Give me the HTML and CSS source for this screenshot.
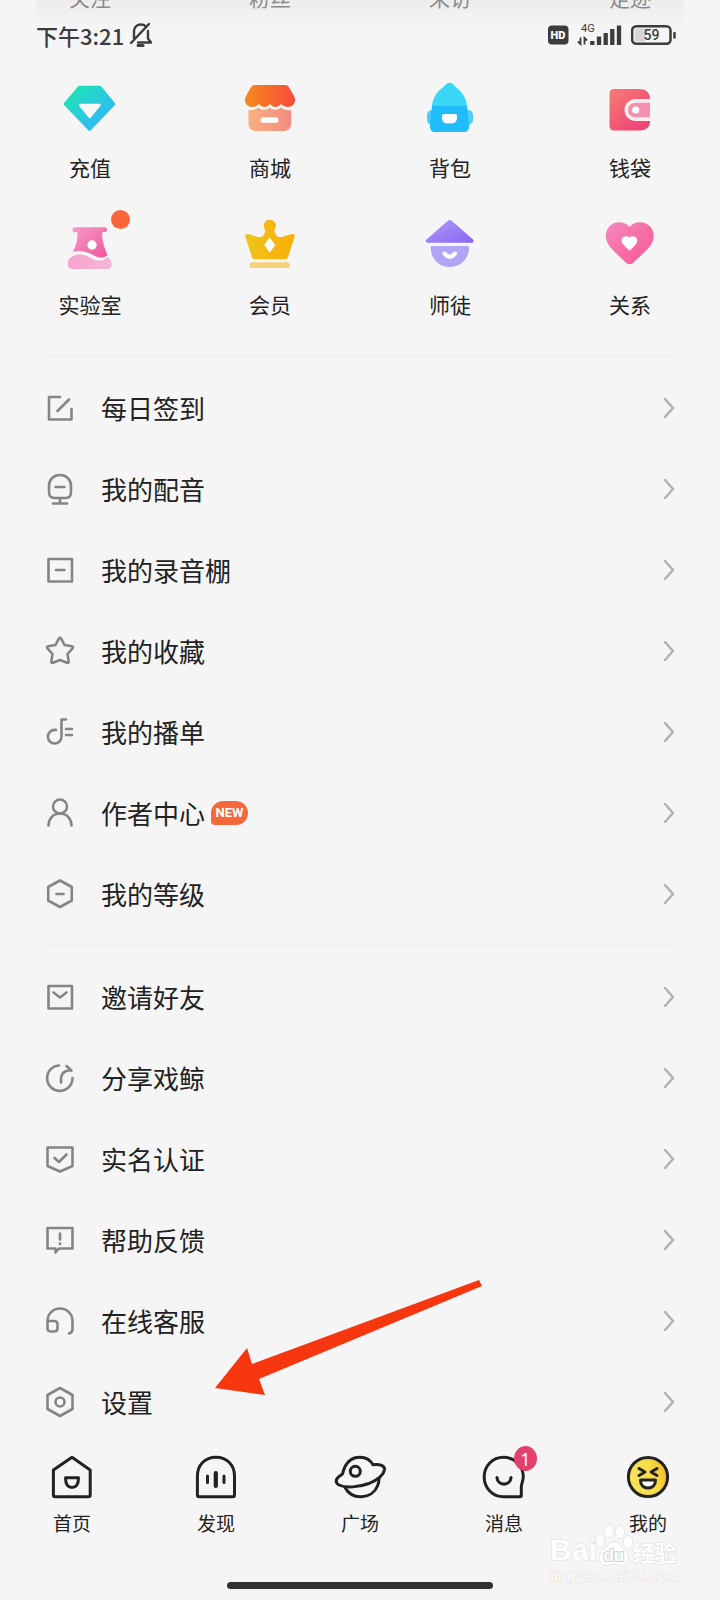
FILE: index.html
```html
<!DOCTYPE html>
<html lang="zh-CN">
<head>
<meta charset="utf-8">
<meta name="viewport" content="width=device-width, initial-scale=1">
<title>我的</title>
<link rel="stylesheet" href="styles.css">
</head>
<body>
<header class="top">
  <div class="stats"><span>关注</span><span>粉丝</span><span>来访</span><span>足迹</span></div>
  <div class="status">
    <span class="time">下午3:21</span>
    <svg class="mute" width="24" height="26" viewBox="0 0 24 26" fill="none" stroke="#3c3c3c" stroke-width="2.4" stroke-linecap="round" stroke-linejoin="round"><path d="M5 16V9.500C5 5 8 2.500 12 2.500c2 0 3.500.6 4.800 1.800M19 9v7.500l3 4H9M2 21 20 2"/><path d="M9 23.500h5" stroke-width="3"/></svg>
    <svg class="signals" width="130" height="26" viewBox="0 0 130 26">
      <rect x="1" y="3.500" width="20.500" height="19" rx="4" fill="#3c3c3c"/>
      <text x="11" y="17" class="hd" text-anchor="middle">HD</text>
      <text x="34" y="9.500" class="net">4G</text>
      <path d="M33.500 15.500v6.500l-2.500-2.500M37.500 22.500v-6.500l2.500 2.500" fill="none" stroke="#3c3c3c" stroke-width="1.800"/>
      <path d="M45.300 19v4M52 14.500V23M58.700 11v12M65.300 7v16M72 3.500V23" fill="none" stroke="#3c3c3c" stroke-width="4.300"/>
      <rect x="85.200" y="4.200" width="38.300" height="17.500" rx="4" fill="none" stroke="#3c3c3c" stroke-width="2.500"/>
      <path d="M88 6.500h10v13H88z" fill="#d5d5d5"/>
      <path d="M127.500 11v4.500" stroke="#3c3c3c" stroke-width="2.500" stroke-linecap="round"/>
      <text x="104.500" y="18" class="charge" text-anchor="middle">59</text>
    </svg>
  </div>
</header>

<main>
<nav class="shortcuts" aria-label="快捷入口">
  <a href="#"><span class="pic"><svg width="56" height="56" viewBox="0 0 56 56"><defs><linearGradient id="g1" x1="0" y1="0" x2="1" y2="1"><stop offset=".1" stop-color="#20e3b6"/><stop offset=".9" stop-color="#33b4ff"/></linearGradient></defs><path d="M17.500 8.500h20.500L51.500 25 27.500 50 3.500 25z" fill="url(#g1)" stroke="url(#g1)" stroke-width="3.500" stroke-linejoin="round"/><path d="M18 26h19.500L27.700 38z" fill="#f8f8f8" stroke="#f8f8f8" stroke-width="2.500" stroke-linejoin="round"/></svg></span>充值</a>
  <a href="#"><span class="pic"><svg width="56" height="56" viewBox="0 0 56 56"><defs><linearGradient id="g2"><stop stop-color="#f58a1f"/><stop offset="1" stop-color="#fb4a3a"/></linearGradient><linearGradient id="g3"><stop stop-color="#f8b080"/><stop offset="1" stop-color="#f58b80"/></linearGradient></defs><path d="M13 6h30c2 0 3 .8 4 2.300l5 8.700c3 6-1 11-6 11-3 0-5-1-7-3-3 4-8 4-11 0-3 4-8 4-11 0-2 2-4 3-7 3-5 0-9-5-6-11l5-8.700C10 6.800 11 6 13 6z" fill="url(#g2)"/><path d="M6.500 31c4 .5 7-.5 10-2.500 3 3 8 3 11.200 0 3.200 3 8 3 11 0 3 2 6 3 10.300 2.500V45c0 4-3 7-7 7H13.500c-4 0-7-3-7-7z" fill="url(#g3)"/><rect x="18.500" y="38.300" width="18" height="5.500" rx="2.500" fill="#fff"/></svg></span>商城</a>
  <a href="#"><span class="pic"><svg width="56" height="56" viewBox="0 0 56 56"><rect x="5" y="31" width="46" height="15" rx="5" fill="#51cdf9"/><path d="M10 29c0-9 4-15 10-20 3-2 4-5.300 7.700-5.300S32 7 35 9c6 5 10 11 10 20z" fill="#3ad6f8"/><path d="M10 27h35c.5 7 2 12 2 20 0 4-2 6-5 6H13c-3 0-5-2-5-6 0-8 1.500-13 2-20z" fill="#22bdf8"/><path d="M22 35h11c1.500 0 2 .7 2 2v2c0 3-2 5.300-5 5.300h-5c-3 0-5-2.300-5-5.300v-2c0-1.300.7-2 2-2z" fill="#fff"/></svg></span>背包</a>
  <a href="#"><span class="pic"><svg width="56" height="56" viewBox="0 0 56 56"><defs><linearGradient id="g4" x1="0" y1="0" x2=".8" y2="1"><stop stop-color="#f67c72"/><stop offset="1" stop-color="#ef4179"/></linearGradient></defs><path d="M12 10h26c6 0 10 4 10 10v22c0 6-4 9.500-10 9.500H12c-3 0-4.500-2-4.500-4.500V14.500C7.500 12 9 10 12 10z" fill="url(#g4)"/><path d="M49 20H34c-7 0-11.500 5-11.500 11S27 42 34 42h15z" fill="#fbeff1"/><path d="M48 23.800H34c-5 0-8 3-8 7.200s3 7.300 8 7.300h14z" fill="#f391ae"/><circle cx="33.700" cy="31" r="3.600" fill="#fff"/></svg></span>钱袋</a>
  <a href="#"><span class="pic"><svg width="56" height="56" viewBox="0 0 56 56"><defs><linearGradient id="g5" x1="0" y1="0" x2="1" y2="1"><stop stop-color="#f79cc9"/><stop offset="1" stop-color="#f0559b"/></linearGradient><linearGradient id="g6"><stop stop-color="#f5a3ce"/><stop offset="1" stop-color="#f6b6d6"/></linearGradient></defs><path d="M13 11.300h29.500c3.500 0 3.500 5 0 5H40c0 8 2 15 5.500 23-4 3-8 3-13 .5-7-4-14-6-22-4 4-6 5-12 5-19.500H13c-3.500 0-3.500-5 0-5z" fill="url(#g5)"/><circle cx="30" cy="29" r="4.700" fill="#fff"/><path d="M8 42c6-5 14-4 20-.5 7 4 12 4.500 18-.5 3 3 4 5.500 3.700 8-.2 2.500-2 4-5 4H11c-3 0-5.300-2-5.300-5 0-2.500.8-4.500 2.300-6z" fill="url(#g6)"/></svg><i class="dot"></i></span>实验室</a>
  <a href="#"><span class="pic"><svg width="56" height="56" viewBox="0 0 56 56"><defs><linearGradient id="g7"><stop stop-color="#eec51d"/><stop offset="1" stop-color="#fcad06"/></linearGradient></defs><path d="M27.700 3.700a6.200 6.200 0 0 1 4.500 10.500c1 4 2.500 7 5.800 7 4 0 8-2.500 12-3.200 2-.3 3 .7 2.600 2.500l-6.500 20c-.5 1.800-1.500 2.700-3.300 2.700H13c-1.800 0-2.800-.9-3.300-2.700l-6.500-20C2.800 18.700 4 17.700 6 18c4 .7 8 3.200 12 3.200 3.300 0 4.600-3 5.500-7a6.200 6.200 0 0 1 4.200-10.500z" fill="url(#g7)"/><path d="m27.700 22 5 7-5 7-5-7z" fill="#fff" stroke="#fff" stroke-linejoin="round"/><rect x="7.500" y="46.300" width="40.500" height="5.700" rx="2.800" fill="#f4d27c"/></svg></span>会员</a>
  <a href="#"><span class="pic"><svg width="56" height="56" viewBox="0 0 56 56"><defs><linearGradient id="g8" x1="0" y1="0" x2="1" y2="1"><stop offset=".3" stop-color="#a58bf6"/><stop offset="1" stop-color="#8466f0"/></linearGradient></defs><path d="M25.500 5c1.500-1.200 3-1.200 4.500 0l21 18.500c1.300 1.500.7 3.200-1.500 3.200H6c-2.200 0-3-1.700-1.500-3.200z" fill="url(#g8)"/><path d="M10 30h35.500c1 0 1.500.5 1.500 1.500C47 43 38.500 51 27.800 51S8.700 43 8.700 31.500c0-1 .3-1.500 1.300-1.500z" fill="#b3a5f6"/><path d="M22.500 37.500c3 4.300 7.500 4.300 10.500 0" fill="none" stroke="#fff" stroke-width="4" stroke-linecap="round"/></svg></span>师徒</a>
  <a href="#"><span class="pic"><svg width="56" height="56" viewBox="0 0 56 56"><defs><linearGradient id="g9" x1="0" y1="0" x2="1" y2="1"><stop stop-color="#f28abd"/><stop offset="1" stop-color="#fb5592"/></linearGradient></defs><path d="M27.700 11C34 4 44 5.500 49 11.500c5 7 2.500 15-2.500 20.500-6 6-11 11-15.500 15-2 1.700-4.500 1.700-6.500 0-4.500-4-10-9-15.500-15C4 26.500 1.500 18.500 6.500 11.500 11 5.500 21 4 27.700 11z" fill="url(#g9)"/><path d="M27.500 21.500c2-2 5.500-1.700 7 .5 1.500 2.500.5 5-1 6.700l-4.800 5c-.8.800-1.600.8-2.400 0l-4.800-5c-1.600-1.700-2.700-4.200-1-6.700 1.500-2.200 5-2.500 7-.5z" fill="#fff"/></svg></span>关系</a>
</nav>

<nav class="list" aria-label="我的内容">
  <a href="#"><svg class="ico" viewBox="0 0 32 32"><path d="M16 5H5v22.500h22.500V17M13.500 19 25 7.500"/></svg>每日签到<svg class="go" viewBox="0 0 12 20"><path d="m2 1 8 9-8 9"/></svg></a>
  <a href="#"><svg class="ico" viewBox="0 0 32 32"><path d="M16 2c6.500 0 11 4.500 11 11v6.500c0 3.500-2 5.500-5.500 5.500h-11C7 25 5 23 5 19.500V13C5 6.500 9.500 2 16 2zM16 25v5.500M9 30.500h14M11.500 14h9"/></svg>我的配音<svg class="go" viewBox="0 0 12 20"><path d="m2 1 8 9-8 9"/></svg></a>
  <a href="#"><svg class="ico" viewBox="0 0 32 32"><path d="M4.500 5h23.500v22.500H4.500zM12 16h8.500"/></svg>我的录音棚<svg class="go" viewBox="0 0 12 20"><path d="m2 1 8 9-8 9"/></svg></a>
  <a href="#"><svg class="ico" viewBox="0 0 32 32"><path d="M14.800 3.600q1.200-1.500 2.400 0L20.500 10l7.300 1.200q2 .5.700 2.200L23.500 19l1.200 7.500q.2 2-1.700 1.300L16 25l-7 2.800q-1.900.7-1.700-1.300L8.500 19l-5-5.600q-1.300-1.700.7-2.200L11.500 10z"/></svg>我的收藏<svg class="go" viewBox="0 0 12 20"><path d="m2 1 8 9-8 9"/></svg></a>
  <a href="#"><svg class="ico" viewBox="0 0 32 32"><path d="M22 3.500h-4.500v17.200a6.800 6.800 0 1 1-6.800-6.800h1.300M22 13h6M22 19h6"/></svg>我的播单<svg class="go" viewBox="0 0 12 20"><path d="m2 1 8 9-8 9"/></svg></a>
  <a href="#"><svg class="ico" viewBox="0 0 32 32"><circle cx="16" cy="9.500" r="7"/><path d="M4.500 28.500C5 21 9.500 16.500 16 16.500S27 21 27.500 28.500"/></svg>作者中心<span class="new">NEW</span><svg class="go" viewBox="0 0 12 20"><path d="m2 1 8 9-8 9"/></svg></a>
  <a href="#"><svg class="ico" viewBox="0 0 32 32"><path d="m16 2.500 11.800 6.500v13.500L16 29 4.200 22.500V9zM12.500 16h7"/></svg>我的等级<svg class="go" viewBox="0 0 12 20"><path d="m2 1 8 9-8 9"/></svg></a>
</nav>

<nav class="list" aria-label="更多服务">
  <a href="#"><svg class="ico" viewBox="0 0 32 32"><path d="M4.500 5h23.500v22.500H4.500zM9.500 11.500l6.500 5 6.500-5"/></svg>邀请好友<svg class="go" viewBox="0 0 12 20"><path d="m2 1 8 9-8 9"/></svg></a>
  <a href="#"><svg class="ico" viewBox="0 0 32 32"><path d="M15 3.500A12.700 12.700 0 1 0 28.500 16M17 20.500c-.5-7 2-11.500 7.500-12h3M22.500 4 27.500 8.500"/></svg>分享戏鲸<svg class="go" viewBox="0 0 12 20"><path d="m2 1 8 9-8 9"/></svg></a>
  <a href="#"><svg class="ico" viewBox="0 0 32 32"><path d="M3.500 4.500h25v18.500L16 28.500 3.500 23zM10.500 15l4.500 4 7.500-7.500"/></svg>实名认证<svg class="go" viewBox="0 0 12 20"><path d="m2 1 8 9-8 9"/></svg></a>
  <a href="#"><svg class="ico" viewBox="0 0 32 32"><path d="M3.500 4h25v20.500H15L11.500 28.500v-4h-8zM16 9.500v6M16 19.500v.5"/></svg>帮助反馈<svg class="go" viewBox="0 0 12 20"><path d="m2 1 8 9-8 9"/></svg></a>
  <a href="#"><svg class="ico" viewBox="0 0 32 32"><path d="M3.500 24v-8a12.500 12.500 0 0 1 25 0v8c0 2.500-1 4-3.500 4.500M3.500 16H10q3.500 0 3.500 3v4.500q0 3-3.500 3H7q-3.500 0-3.500-3z"/></svg>在线客服<svg class="go" viewBox="0 0 12 20"><path d="m2 1 8 9-8 9"/></svg></a>
  <a href="#"><svg class="ico" viewBox="0 0 32 32"><path d="m16 2 12.500 7v14L16 30 3.500 23V9z"/><circle cx="16" cy="16" r="4.500"/></svg>设置<svg class="go" viewBox="0 0 12 20"><path d="m2 1 8 9-8 9"/></svg>
    <svg class="arrow" width="268" height="117" viewBox="0 0 268 117"><path d="m0 109 32-40 5 16L264 1l3 6L44 100l6 16z" fill="#f6360f"/></svg></a>
</nav>
</main>

<footer class="bottom">
  <nav class="tabs" aria-label="主导航">
    <a href="#"><svg viewBox="0 0 54 48"><path d="M27 4.300 45.200 17v25q0 1.800-1.800 1.800H10.200q-1.800 0-1.800-1.800V17z"/><path d="M20.500 24.800h13q0 9.700-6.500 9.700t-6.500-9.700z"/></svg>首页</a>
    <a href="#"><svg viewBox="0 0 54 48"><path d="M8.400 23C8.400 12 16 4.300 27 4.300S45.500 12 45.500 23v19q0 1.800-1.800 1.800H10.200q-1.800 0-1.800-1.800zM18.500 23v6.500M35 23v6.500"/><path d="M26.800 20v13" stroke-width="4.200"/></svg>发现</a>
    <a href="#"><svg viewBox="0 0 54 48"><path d="M9.500 21C12 10 18 4.200 27 4.200c6 0 10.500 3 13 7.500 7-1 12 1.300 11.500 5C50.500 23 44 27 36 30.500 26 34 13 35.500 6 32 1 29 3 25 9.500 21z"/><path d="M12 34.500c7 13 27 12 32.500-1.500 1-2.500 1.500-4.500 1.500-7"/><circle cx="22.300" cy="18.300" r="5"/></svg>广场</a>
    <a href="#"><span class="pin"><svg viewBox="0 0 54 48"><path d="M26.500 4.300C37.500 4.300 46.300 13 46.300 24c0 3-1.800 6.500-2 10v8.500q0 1.300-1.300 1.300H26.500C15.500 43.800 7.200 35 7.200 24S15.500 4.300 26.500 4.300z"/><path d="M20 24.500c.5 8.700 13.500 8.700 14 0" stroke-width="3.200"/></svg><b class="count">1</b></span>消息</a>
    <a href="#" aria-current="page"><svg viewBox="0 0 54 48"><defs><linearGradient id="g10" x1="0" y1=".6" x2="1" y2=".3"><stop stop-color="#f8e35e"/><stop offset=".6" stop-color="#f9dc46"/><stop offset="1" stop-color="#f2b923"/></linearGradient></defs><circle cx="27" cy="24" r="19.600" fill="url(#g10)"/><path d="m18 15.500 6 3.500-6 3.500M36 15.500 30 19l6 3.500"/><path d="M19.500 27h15c0 5-3 8-7.500 8s-7.500-3-7.500-8z" fill="#fff"/></svg>我的</a>
  </nav>
  <div class="home-bar"></div>
  <div class="watermark">
    <div class="brand">Bai<span class="paw"><svg width="38" height="42" viewBox="0 0 38 42"><g fill="#fff" stroke="#d9d9d9"><ellipse cx="5" cy="17" rx="4.200" ry="6"/><ellipse cx="14" cy="7" rx="4.500" ry="6"/><ellipse cx="25" cy="8" rx="4.500" ry="6"/><ellipse cx="33" cy="18" rx="4.200" ry="6"/><path d="M19 18c5 0 7 5 10 8 6 5 6 15-3 15-3 0-4-1-7-1s-4 1-7 1c-9 0-9-10-3-15 3-3 5-8 10-8z"/></g></svg><span class="du">du</span></span><span class="jy">经验</span></div>
    <div class="site">jingyan.baidu.com</div>
  </div>
</footer>
</body>
</html>
```

FILE: styles.css
```css
* { box-sizing: border-box; }

body {
  margin: 0;
  background: #f5f5f5;
  color: #222;
  font-family: "Noto Sans CJK SC", "Noto Sans", sans-serif;
}

a { color: inherit; text-decoration: none; }
svg { display: block; flex: none; }

/* header: stats scrolled partly out of view behind the system status bar */
.top {
  margin-top: -18px;
  background: linear-gradient(#e6e6e6, #f5f5f5) center top / calc(100% - 72px) 44px no-repeat;
}

.stats {
  display: grid;
  grid-template-columns: repeat(4, 1fr);
  justify-items: center;
  color: #8a8a8a;
  font-size: 21px;
  line-height: 30px;
}

.status {
  display: flex;
  align-items: center;
  height: 46px;
  padding: 0 43px 0 36px;
}

.time { color: #3c3c3c; font-size: 22px; font-weight: 500; line-height: 28px; }
.mute { margin-left: 5px; }
.signals { margin-left: auto; }
.signals text { font-family: Roboto, sans-serif; fill: #3c3c3c; }
.signals .hd { font-size: 11px; font-weight: 900; fill: #fff; }
.signals .net { font-size: 11px; font-weight: 400; }
.signals .charge { font-size: 14px; font-weight: 500; }

/* coloured shortcut grid */
.shortcuts {
  display: grid;
  grid-template-columns: repeat(4, 1fr);
  row-gap: 34px;
  padding: 21px 0 37px;
}

.shortcuts a {
  display: flex;
  flex-direction: column;
  align-items: center;
  gap: 17px;
  font-size: 21px;
  line-height: 30px;
}

.pic { position: relative; }

.dot {
  position: absolute;
  top: -6px;
  right: -12px;
  width: 19px;
  height: 19px;
  border-radius: 50%;
  background: #fa653a;
}

/* menu lists */
.list { position: relative; padding: 11px 45px; }

.list::before {
  content: "";
  position: absolute;
  top: 0;
  left: 46px;
  right: 46px;
  height: 1px;
  background: #ececec;
}

.list a {
  position: relative;
  display: flex;
  align-items: center;
  height: 81px;
  font-size: 26px;
  line-height: 36px;
}

.ico {
  width: 32px;
  height: 32px;
  margin-right: 25px;
  margin-left: -1px;
  fill: none;
  stroke: #858585;
  stroke-width: 2.6;
  stroke-linecap: round;
  stroke-linejoin: round;
}

.go {
  width: 12px;
  height: 20px;
  margin-left: auto;
  fill: none;
  stroke: #b2b2b2;
  stroke-width: 2.5;
  stroke-linecap: round;
  stroke-linejoin: round;
}

.new {
  margin-left: 6px;
  width: 37px;
  border-radius: 12px 12px 12px 4px;
  background: #f4683c;
  color: #fff;
  font: bold 13px/24px Roboto, sans-serif;
  text-align: center;
}

.arrow { position: absolute; left: 170px; bottom: 46px; pointer-events: none; }

/* bottom navigation */
.bottom { position: relative; padding-bottom: 11px; }

.tabs {
  display: grid;
  grid-template-columns: repeat(5, 1fr);
}

.tabs a {
  display: flex;
  flex-direction: column;
  align-items: center;
  gap: 8px;
  font-size: 19px;
  line-height: 28px;
}

.tabs svg {
  width: 54px;
  height: 48px;
  fill: none;
  stroke: #222;
  stroke-width: 3;
  stroke-linecap: round;
  stroke-linejoin: round;
}

.pin { position: relative; }

.count {
  position: absolute;
  top: -7px;
  right: -6px;
  width: 23px;
  height: 25px;
  border-radius: 50%;
  background: #e3416b;
  color: #fff;
  font: 18px/26px "Noto Sans", sans-serif;
  text-align: center;
}

.home-bar {
  width: 37%;
  height: 7px;
  margin: 45px auto 0;
  border-radius: 4px;
  background: #333;
}

.watermark {
  position: absolute;
  right: 40px;
  bottom: 16px;
  color: #fff;
  -webkit-text-stroke: 1px #dcdcdc;
  paint-order: stroke fill;
  pointer-events: none;
}

.brand {
  display: flex;
  align-items: flex-end;
  font: bold 30px/32px "Liberation Sans", sans-serif;
}

.paw { position: relative; margin-left: -2px; }

.du {
  position: absolute;
  left: 0;
  right: 0;
  bottom: 0;
  font-size: 17px;
  line-height: 20px;
  text-align: center;
  -webkit-text-stroke: 2px #d2d2d2;
}

.jy { font: bold 22px/30px "Noto Sans CJK SC", sans-serif; }
.site { font: 15px/18px "Noto Sans", sans-serif; }
```
